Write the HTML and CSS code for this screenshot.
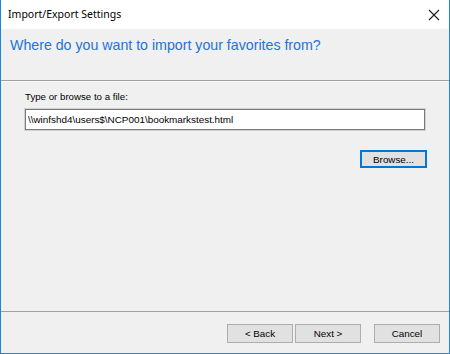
FILE: index.html
```html
<!DOCTYPE html>
<html lang="en">
<head>
  <meta charset="UTF-8" />
  <title>Import/Export Settings</title>
  <link rel="stylesheet" href="styles.css">
</head>
<body>

<div class="window">
  <div class="titlebar">
    <span class="title">Import/Export Settings</span>
    <span class="close">
      <svg width="12" height="12" viewBox="0 0 12 12">
        <path d="M1 1 L11 11 M11 1 L1 11" stroke="#1a1a1a" stroke-width="1.1" fill="none"/>
      </svg>
    </span>
  </div>

  <div class="header">
    <h1>Where do you want to import your favorites from?</h1>
  </div>

  <div class="content">
    <label for="filePath">Type or browse to a file:</label>
    <input type="text" id="filePath" value="\\winfshd4\users$\NCP001\bookmarkstest.html" />
    <div class="browse-row">
      <button class="btn default">Browse...</button>
    </div>
  </div>

  <div class="footer">
    <button class="btn">&lt; Back</button>
    <button class="btn next">Next &gt;</button>
    <button class="btn">Cancel</button>
  </div>
</div>

</body>
</html>
```

FILE: styles.css
```css
body {
  margin: 0;
  font-family: 'Liberation Sans', Arial, sans-serif;
  background: #ffffff;
}
.window {
  width: 450px;
  height: 354px;
  box-sizing: border-box;
  border: 1px solid #1c86d8;
  border-top: none;
  display: flex;
  flex-direction: column;
  background: #f0f0f0;
}
.titlebar {
  height: 29px;
  background: white;
  display: flex;
  align-items: center;
  justify-content: space-between;
  padding: 0 8px 0 7px;
}
.title {
  font-family: 'Noto Sans', sans-serif;
  font-size: 10.5px;
  color: #000;
  padding-bottom: 2px;
}
.close {
  display: flex;
  width: 12px;
  height: 12px;
  margin-right: 1px;
}
.header {
  border-bottom: 1px solid #a0a0a0;
  box-sizing: border-box;
  height: 52px;
  padding: 8px 9px 0;
}
.header h1 {
  margin: 0;
  font-size: 14.2px;
  font-weight: normal;
  color: #2374d6;
}
.content {
  flex: 1;
  padding: 9px 24px 0;
  display: flex;
  flex-direction: column;
  border-top: 1px solid #fafafa;
}
label {
  font-size: 9.7px;
  color: #000;
  margin-bottom: 7px;
}
input {
  height: 21px;
  box-sizing: border-box;
  border: 1px solid #7a7a7a;
  box-shadow: 0 0 0 1px #d0d0d0;
  padding: 0 2px;
  font-family: 'Liberation Sans', Arial, sans-serif;
  font-size: 9.9px;
  color: #000;
  outline: none;
}
.browse-row {
  display: flex;
  justify-content: flex-end;
  margin-top: 20px;
  margin-right: -2px;
}
.btn {
  width: 66px;
  height: 19px;
  box-sizing: border-box;
  background: #e1e1e1;
  border: 1px solid #adadad;
  font-family: 'Liberation Sans', Arial, sans-serif;
  font-size: 9.8px;
  color: #000;
  padding: 0;
}
.btn.default {
  width: 67px;
  height: 18px;
  border: 2px solid #0078d7;
}
.footer {
  height: 42px;
  box-sizing: border-box;
  border-top: 1px solid #a0a0a0;
  display: flex;
  justify-content: flex-end;
  align-items: flex-start;
  padding: 12px 9px 0 0;
  gap: 2px;
}
.footer .next {
  margin-right: 11px;
}
```
